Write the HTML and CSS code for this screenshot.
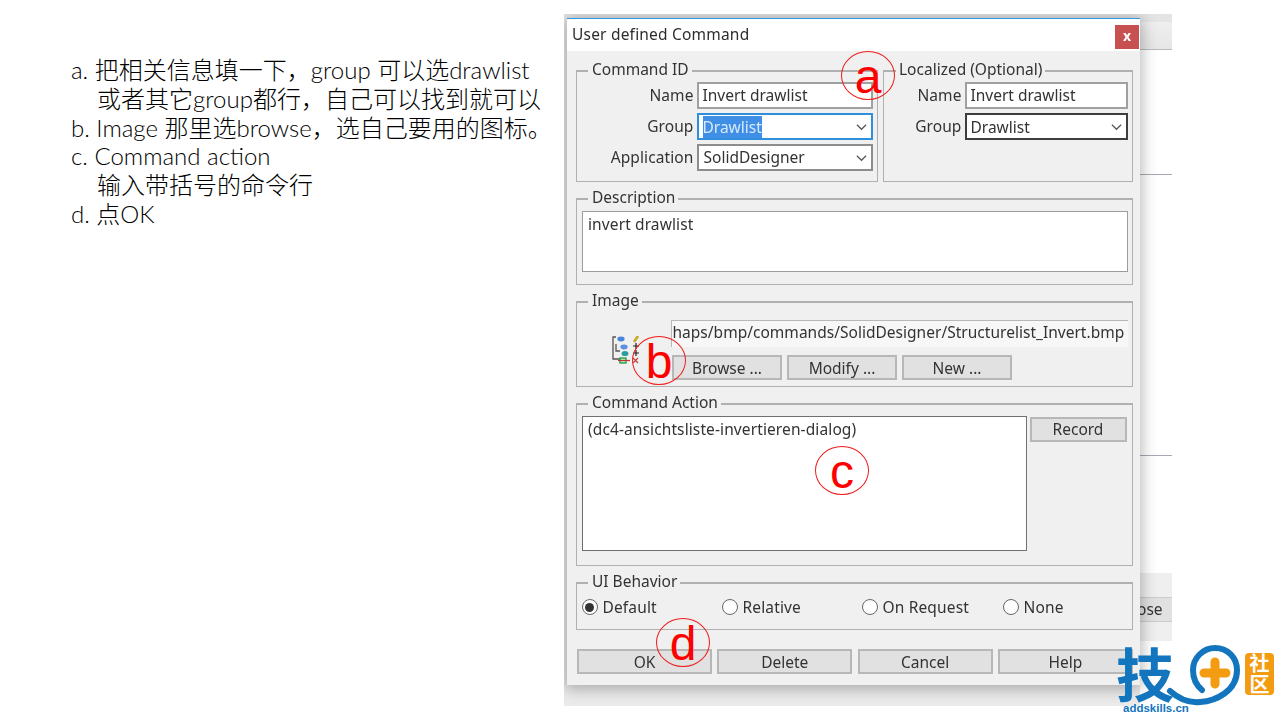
FILE: index.html
```html
<!DOCTYPE html>
<html lang="zh-CN">
<head>
<meta charset="utf-8">
<title>User defined Command</title>
<link rel="stylesheet" href="styles.css">
</head>
<body>
<main class="slide">
  <section class="notes">
    <p class="note">a. 把相关信息填一下，group 可以选drawlist</p>
    <p class="note indent">或者其它group都行，自己可以找到就可以</p>
    <p class="note">b. Image 那里选browse，选自己要用的图标。</p>
    <p class="note">c. Command action</p>
    <p class="note indent">输入带括号的命令行</p>
    <p class="note">d. 点OK</p>
  </section>

  <section class="shot">
    <div class="bg bg-top"></div>
    <div class="bg bg-band"></div>
    <div class="bg bg-line1"></div>
    <div class="bg bg-line2"></div>
    <div class="bg bg-strip"></div>
    <div class="bg bg-close">ose</div>
    <div class="bg bg-left"></div>
    <div class="bg bg-bottom"></div>

    <div class="dialog">
      <header class="titlebar">
        <span class="title">User defined Command</span>
        <span class="close">x</span>
      </header>
      <div class="content">
        <div class="id-row">
          <div class="group g-id">
            <span class="legend">Command ID</span>
            <div class="form form-id">
              <label class="lbl">Name</label>
              <div class="field">Invert drawlist</div>
              <label class="lbl lbl-low">Group</label>
              <div class="field select focus"><span class="sel">Drawlist</span>
                <svg class="chev" viewBox="0 0 12 8"><path d="M1 1.5 6 6.5 11 1.5"/></svg></div>
              <label class="lbl">Application</label>
              <div class="field select">SolidDesigner
                <svg class="chev" viewBox="0 0 12 8"><path d="M1 1.5 6 6.5 11 1.5"/></svg></div>
            </div>
          </div>
          <div class="group g-loc">
            <span class="legend">Localized (Optional)</span>
            <div class="form form-loc">
              <label class="lbl">Name</label>
              <div class="field">Invert drawlist</div>
              <label class="lbl lbl-low">Group</label>
              <div class="field select dark">Drawlist
                <svg class="chev" viewBox="0 0 12 8"><path d="M1 1.5 6 6.5 11 1.5"/></svg></div>
            </div>
          </div>
        </div>

        <div class="group g-desc">
          <span class="legend">Description</span>
          <div class="field area desc-area">invert drawlist</div>
        </div>

        <div class="group g-image">
          <span class="legend">Image</span>
          <div class="icon-cell">
            <svg class="tree" viewBox="0 0 30 30" width="30" height="30">
              <path class="t-line" d="M4 1H1V23H8M4 8V15H8"/>
              <ellipse class="t-blue" cx="9" cy="3" rx="3.6" ry="2.4"/>
              <ellipse class="t-blue2" cx="12" cy="11" rx="3.6" ry="2.4"/>
              <ellipse class="t-teal" cx="13" cy="17.5" rx="3.4" ry="2.6"/>
              <rect class="t-box" x="8" y="22" width="6" height="5"/>
              <path class="t-red" d="M6 24.500H18"/>
              <path class="t-pen" d="M22 6 26 0"/>
              <path class="t-plus" d="M21 10H27M24 7V13M21 17H27M24 14V20"/>
              <path class="t-x" d="M21 22 26 27M26 22 21 27"/>
            </svg>
          </div>
          <div class="image-col">
            <div class="path"><span class="path-text">haps/bmp/commands/SolidDesigner/Structurelist_Invert.bmp</span></div>
            <div class="img-btns">
              <button class="btn b-img">Browse ...</button>
              <button class="btn b-img">Modify ...</button>
              <button class="btn b-img">New ...</button>
            </div>
          </div>
        </div>

        <div class="group g-action">
          <span class="legend">Command Action</span>
          <div class="field area action-area">(dc4-ansichtsliste-invertieren-dialog)</div>
          <button class="btn b-record">Record</button>
        </div>

        <div class="group g-ui">
          <span class="legend">UI Behavior</span>
          <div class="radio"><span class="dot on"></span>Default</div>
          <div class="radio"><span class="dot"></span>Relative</div>
          <div class="radio"><span class="dot"></span>On Request</div>
          <div class="radio"><span class="dot"></span>None</div>
        </div>

        <div class="actions">
          <button class="btn">OK</button>
          <button class="btn">Delete</button>
          <button class="btn">Cancel</button>
          <button class="btn">Help</button>
        </div>
      </div>
    </div>
  </section>

  <div class="mark m-a"><span>a</span></div>
  <div class="mark m-b"><span>b</span></div>
  <div class="mark m-c"><span>c</span></div>
  <div class="mark m-d"><span>d</span></div>

  <div class="logo">
    <svg class="logo-art" viewBox="0 0 130 62" width="130" height="62">
      <text class="logo-ji" x="0" y="52">技</text>
      <path class="logo-ring" d="M54 46C64 55 74 58 84 57C100 56 121 46 121 25C121 12 111 3 99 3C87 3 77 13 77 25C77 33 80 40 86 45"/>
      <path class="logo-plus" d="M88 28H110M99 17V39"/>
    </svg>
    <div class="logo-badge">社区</div>
    <div class="logo-url">addskills.cn</div>
  </div>
</main>
</body>
</html>
```

FILE: styles.css
```css
* { box-sizing: border-box; }
html, body { margin: 0; height: 100%; background: #fff; }
body { overflow: hidden; }

.slide {
  position: relative;
  width: 1280px;
  height: 720px;
  display: flex;
  align-items: flex-start;
  background: #fff;
}

/* Left notes */
.notes {
  width: 564px;
  padding: 55px 0 0 71px;
  font-family: Lato, "Noto Sans CJK SC", sans-serif;
  font-weight: 300;
  font-size: 24px;
  color: #000;
}
.note {
  margin: 0;
  height: 28.800px;
  line-height: 29px;
  white-space: nowrap;
}
.indent { padding-left: 26px; }

/* Screenshot */
.shot {
  position: relative;
  width: 608px;
  height: 692px;
  margin-top: 14px;
  padding: 4px 32px 0 3px;
  overflow: hidden;
  background: #fff;
  font-family: "Noto Sans", sans-serif;
  font-size: 15.5px;
  color: #333;
  filter: blur(0.3px);
}
.bg { position: absolute; }
.bg-top { left: 0; top: 0; width: 100%; height: 8px; background: #e4e4e4; }
.bg-band { left: 576px; top: 8px; width: 32px; height: 28px; background: linear-gradient(#efefef, #e6e6e6); border-bottom: 1px solid #bbb; }
.bg-line1 { left: 576px; top: 160px; width: 32px; height: 1px; background: #a9a9b4; }
.bg-line2 { left: 576px; top: 441px; width: 32px; height: 1px; background: #a9a9b4; }
.bg-strip { left: 576px; top: 559px; width: 32px; height: 68px; background: #efefef; }
.bg-close {
  left: 576px;
  top: 583px;
  width: 32px;
  height: 25px;
  padding-left: 0;
  background: #e1e1e1;
  border: 1px solid #ccc;
  border-width: 1px 0;
  line-height: 23px;
  text-indent: -3px;
  white-space: nowrap;
}
.bg-left { left: 0; top: 0; width: 3px; height: 100%; background: #e6e6e6; }
.bg-bottom { left: 0; top: 671px; width: 576px; height: 21px; background: #ebebeb; }

/* Dialog */
.dialog {
  position: relative;
  width: 573px;
  height: 667px;
  background: #f0f0f0;
  border-top: 1px solid #2f98e4;
  box-shadow: 0 2px 14px 2px rgba(0, 0, 0, 0.28);
}
.titlebar {
  height: 32px;
  background: #fff;
  display: flex;
  justify-content: space-between;
  align-items: center;
  padding: 0 1px 2px 5px;
}
.title { font-size: 15.500px; letter-spacing: 0.2px; color: #2d2d2d; }
.close {
  width: 24px;
  height: 24px;
  margin-top: 5px;
  background: #c75050;
  color: #fff;
  font-weight: 700;
  font-size: 14px;
  line-height: 21px;
  text-align: center;
}
.content { padding: 19px 7px 0 9px; }

.group {
  position: relative;
  border: 1px solid #b0b0b0;
  border-width: 2px 1.500px 1.500px 1.500px;
  margin-bottom: 16px;
}
.legend {
  position: absolute;
  left: 11px;
  top: -13px;
  height: 20px;
  line-height: 20px;
  padding: 0 3px 0 4px;
  background: #f0f0f0;
  white-space: nowrap;
}

.id-row { display: flex; gap: 5px; }
.g-id { width: 302px; height: 112px; padding-top: 10px; }
.g-loc { width: 250px; height: 112px; padding-top: 10px; }
.g-loc .legend { left: 12px; padding: 0 3px; }

.form { display: grid; column-gap: 3px; row-gap: 4px; grid-auto-rows: 27px; }
.form-id { grid-template-columns: 116.500px 176px; }
.form-loc { grid-template-columns: 77.500px 163px; }
.lbl { text-align: right; line-height: 26px; letter-spacing: 0.1px; }
.lbl-low { line-height: 27px; }

.field {
  position: relative;
  background: #fff;
  border: 2px solid #a0a0a0;
  padding: 0 4px;
  line-height: 23px;
  white-space: nowrap;
}
.select { border-color: #8d8d8d; line-height: 23px; padding-left: 5px; }
.focus { border-color: #2f8fdc; line-height: 25px; padding-left: 4px; }
.dark { border-color: #3e3e3e; line-height: 25px; padding-left: 4px; }
.sel { background: #3f8fe6; color: #d9e9fb; }
.chev {
  position: absolute;
  right: 4px;
  top: 8px;
  width: 11px;
  height: 8px;
  fill: none;
  stroke: #555;
  stroke-width: 1.300;
}

.g-desc { height: 87px; padding: 10.500px 0 0 4.500px; }
.area { border-width: 1.500px; border-color: #9c9c9c; line-height: 24px; padding: 0 5.500px; letter-spacing: 0.11px; }
.desc-area { width: 546px; height: 61px; }

.g-image { height: 86px; display: flex; padding-top: 17px; }
.icon-cell { width: 93.500px; padding: 16px 0 0 35px; }
.tree { display: block; fill: none; }
.t-line { stroke: #555; stroke-width: 1.300; }
.t-blue { fill: #4a86d8; }
.t-blue2 { fill: #5b8fe0; }
.t-teal { fill: #2b9d9d; }
.t-box { fill: #bfe6bf; stroke: #1d9a3c; stroke-width: 1.300; }
.t-red { stroke: #c23333; stroke-width: 1.200; }
.t-pen { stroke: #c9a91f; stroke-width: 2.600; }
.t-plus { stroke: #222; stroke-width: 1.200; }
.t-x { stroke: #c24747; stroke-width: 1.300; }
.image-col { width: 457px; }
.path {
  height: 27px;
  background: #f7f7f7;
  border-top: 1px solid #b8b8b8;
  border-left: 1px solid #b8b8b8;
  line-height: 23px;
  overflow: hidden;
  white-space: nowrap;
  padding-left: 1px;
  letter-spacing: 0.02px;
}
.img-btns { display: flex; gap: 5px; margin: 8px 0 0 1.500px; }

.btn {
  display: block;
  height: 25px;
  padding: 0;
  border: 2px solid #b7b7b7;
  background: #e1e1e1;
  font: inherit;
  line-height: 20px;
  color: #333;
  white-space: nowrap;
}
.b-img { width: 110px; }
.g-action { height: 163px; display: flex; align-items: flex-start; gap: 3px; padding: 10.500px 0 0 4.500px; }
.action-area { width: 445px; height: 135px; border-color: #707070; }
.b-record { width: 97px; margin-top: 1px; }

.g-ui {
  height: 48px;
  display: grid;
  grid-template-columns: 140px 140px 141px 1fr;
  align-items: center;
  padding: 1px 0 0 4.500px;
  margin-bottom: 19px;
}
.radio { display: flex; align-items: center; gap: 5px; line-height: 18px; height: 18px; letter-spacing: 0.15px; }
.dot {
  position: relative;
  width: 16px;
  height: 16px;
  flex: none;
  background: #fff;
  border: 1.500px solid #666;
  border-radius: 50%;
}
.on::after {
  content: "";
  position: absolute;
  inset: 2.500px;
  background: #333;
  border-radius: 50%;
}

.actions { display: grid; grid-template-columns: repeat(4, 135px); column-gap: 5.300px; margin-left: 1px; }

/* Red annotation circles */
.mark {
  position: absolute;
  display: flex;
  align-items: center;
  justify-content: center;
  width: 54px;
  height: 49px;
  border: 1px solid #f01c1c;
  border-radius: 50%;
  font-family: "Liberation Sans", sans-serif;
  font-size: 48px;
  line-height: 49px;
  color: #ff0000;
}
.mark span { display: block; margin-top: 1px; }
.m-a { left: 841px; top: 51px; }
.m-b { left: 632px; top: 336px; }
.m-c { left: 815px; top: 446px; }
.m-d { left: 656px; top: 618px; }

/* Logo */
.logo { position: absolute; left: 1116px; top: 645px; width: 164px; height: 75px; }
.logo-art { position: absolute; left: 0; top: 0; overflow: visible; }
.logo-ji { font-family: "Noto Sans CJK SC", sans-serif; font-weight: 700; font-size: 58px; fill: #1275bd; }
.logo-ring { fill: none; stroke: #1275bd; stroke-width: 6; stroke-linecap: round; }
.logo-plus { fill: none; stroke: #f39c12; stroke-width: 9; stroke-linecap: round; }
.logo-badge {
  position: absolute;
  left: 129px;
  top: 8px;
  width: 29px;
  height: 42px;
  border-radius: 4px;
  background: #f39c12;
  color: #fff;
  font-family: "Noto Sans CJK SC", sans-serif;
  font-weight: 700;
  font-size: 20px;
  line-height: 29px;
  letter-spacing: 1px;
  text-align: center;
  writing-mode: vertical-rl;
}
.logo-url {
  position: absolute;
  left: 7px;
  top: 57px;
  font-family: "Liberation Sans", sans-serif;
  font-weight: 700;
  font-size: 11.500px;
  color: #1275bd;
}
```
